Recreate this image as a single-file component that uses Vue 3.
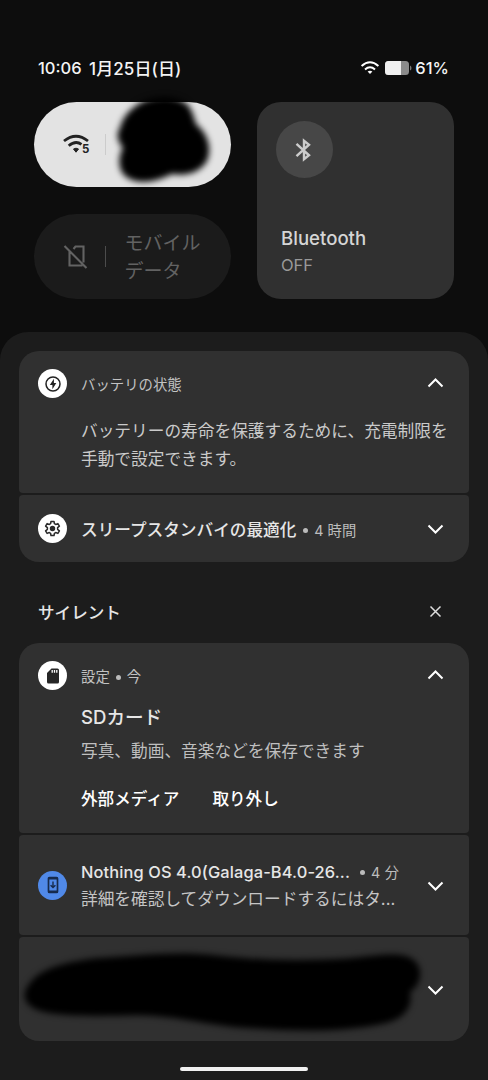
<script setup>
const up = 'M1.5 8.5 8.5 1.5 15.5 8.5'
const down = 'M1.5 1.5 8.5 8.5 15.5 1.5'
</script>

<template>
  <main class="screen">
    <header class="status">
      <span class="clock">10:06</span>
      <span class="date">1月25日(日)</span>
      <span class="grow"></span>
      <svg class="status-wifi" width="20" height="16" viewBox="0 0 20 16" fill="none" stroke="#fff" stroke-width="2">
        <path d="M1.6 6Q10-1.400 18.4 6M5 9.500Q10 5.100 15 9.500" />
        <path d="M7.600 11.500Q10 9.800 12.400 11.500L10 14Z" fill="#fff" stroke="none" />
      </svg>
      <svg class="battery" width="28" height="16" viewBox="0 0 28 16">
        <rect x="1" y="1" width="24" height="14" rx="3.5" fill="#8b8b8b" />
        <path d="M4.500 1H17V15H4.500A3.500 3.500 0 0 1 1 11.500V4.500A3.500 3.500 0 0 1 4.500 1Z" fill="#efefef" />
        <path d="M26 5.500q1.500.5 1.500 2.500T26 10.500Z" fill="#777" />
      </svg>
      <span class="percent">61%</span>
    </header>

    <section class="tiles">
      <div class="pills">
        <div class="pill pill-on">
          <svg class="pill-icon" width="30" height="24" viewBox="0 0 30 24" fill="none" stroke="#222" stroke-width="2.800">
            <path d="M2 8Q14-1.600 26 8M6.700 12.800Q13.500 7 19.500 11.300" />
            <path d="M11.500 16Q14 14.400 16.500 16L14 19.200Z" fill="#222" stroke-width="1" />
            <text x="20" y="20" class="five">5</text>
          </svg>
          <span class="rule"></span>
          <svg class="scribble-top" width="116" height="104" viewBox="0 0 116 104">
            <path d="M12 36C15 23 26 13 38 8C53 3 69 4 79 12C85 19 86 26 88 32C98 40 105 54 99 69C91 82 76 84 64 82C50 89 29 95 16 83C9 75 11 62 15 56C9 49 8 42 12 36Z" />
          </svg>
        </div>
        <div class="pill pill-off">
          <svg class="pill-icon" width="30" height="28" viewBox="0 0 30 28" fill="none" stroke="#636363" stroke-width="2.100">
            <path d="M11.500 6 13.500 3.500H21.500V19.500M7.500 8V22.500H20.500M2.500 3 24.500 25" />
          </svg>
          <span class="rule"></span>
          <span class="pill-text">モバイル<br>データ</span>
        </div>
      </div>
      <div class="bluetooth">
        <span class="bt-circle">
          <svg class="bt-icon" width="22" height="28" viewBox="0 0 22 28" fill="none" stroke="#ccc" stroke-width="2.400">
            <path d="M3.500 7.800 16 19.300 11 23.300V4.700L16 8.700 3.500 20.200" />
          </svg>
        </span>
        <strong class="bt-name">Bluetooth</strong>
        <span class="bt-state">OFF</span>
      </div>
    </section>

    <section class="shade">
      <div class="group">
        <article class="card card-battery">
          <span class="badge">
            <svg width="18" height="18" viewBox="0 0 18 18">
              <circle cx="9" cy="9" r="7" fill="none" stroke="#222" stroke-width="1.500" />
              <path d="M9.900 3.700 5.800 10H8.400V14.300L12.300 8H9.900Z" fill="#222" />
            </svg>
          </span>
          <div class="body">
            <div class="app">バッテリの状態</div>
            <p class="message">バッテリーの寿命を保護するために、充電制限を<br>手動で設定できます。</p>
          </div>
          <svg class="chevron" width="17" height="10" viewBox="0 0 17 10"><path :d="up" /></svg>
        </article>
        <article class="card card-sleep">
          <span class="badge">
            <svg width="17" height="17" viewBox="0 0 18 18" fill="none" stroke="#2a2a2a" stroke-width="1.600" stroke-linejoin="round">
              <path d="M7.400 1.500H10.600L11 3.900 12.400 4.700 14.700 3.800 16.300 6.500 14.400 8.100V9.900L16.300 11.500 14.700 14.200 12.400 13.300 11 14.100 10.600 16.500H7.400L7 14.100 5.600 13.300 3.300 14.200 1.700 11.500 3.600 9.900V8.100L1.700 6.500 3.300 3.800 5.600 4.700 7 3.900Z" />
              <circle cx="9" cy="9" r="2.100" fill="#2a2a2a" />
            </svg>
          </span>
          <div class="body line">
            <span class="title">スリープスタンバイの最適化</span>
            <i class="dot"></i>
            <span class="time">4 時間</span>
          </div>
          <svg class="chevron" width="17" height="10" viewBox="0 0 17 10"><path :d="down" /></svg>
        </article>
      </div>

      <div class="silent">
        <span>サイレント</span>
        <svg width="13" height="13" viewBox="0 0 13 13" fill="none" stroke="#ddd" stroke-width="1.500"><path d="M1.500 1.500 11.500 11.500M11.500 1.500 1.500 11.500" /></svg>
      </div>

      <div class="group">
        <article class="card card-sd">
          <span class="badge">
            <svg width="18" height="18" viewBox="0 0 18 18">
              <path d="M7.500 1.500H13.500Q15 1.500 15 3V15Q15 16.500 13.500 16.500H4.500Q3 16.500 3 15V6Z" fill="#262626" />
              <path d="M8.200 3v2.700M10.500 3v2.700M12.800 3v2.700" stroke="#fff" stroke-width="1.300" />
            </svg>
          </span>
          <div class="body">
            <div class="app line"><span>設定</span><i class="dot"></i><span>今</span></div>
            <div class="sd-title">SDカード</div>
            <div class="sd-text">写真、動画、音楽などを保存できます</div>
            <div class="actions"><span>外部メディア</span><span>取り外し</span></div>
          </div>
          <svg class="chevron" width="17" height="10" viewBox="0 0 17 10"><path :d="up" /></svg>
        </article>
        <article class="card card-update">
          <span class="badge badge-blue">
            <svg width="18" height="20" viewBox="0 0 18 20" fill="none" stroke="#172b4d">
              <rect x="4.500" y="2.500" width="9" height="15" rx="1" stroke-width="1.700" />
              <path d="M4 3.500H14M4 16.500H14" stroke-width="2" />
              <path d="M9 6.500V12.500M6.600 10.200 9 12.600 11.400 10.200" stroke-width="1.400" />
            </svg>
          </span>
          <div class="body">
            <div class="line">
              <span class="os">Nothing OS 4.0(Galaga-B4.0-26...</span>
              <i class="dot"></i>
              <span class="time">4 分</span>
            </div>
            <div class="detail">詳細を確認してダウンロードするにはタ...</div>
          </div>
          <svg class="chevron" width="17" height="10" viewBox="0 0 17 10"><path :d="down" /></svg>
        </article>
        <article class="card card-hidden">
          <svg class="scribble-bottom" width="420" height="95" viewBox="0 0 420 100" preserveAspectRatio="none">
            <path d="M11 40C22 24 48 18 76 14C120 11 158 6 198 11C240 16 280 17 330 14C361 11 383 6 395 16C405 25 402 43 391 49C394 65 386 78 364 83C325 92 279 91 235 88C192 86 164 75 118 74C80 75 40 76 20 69C4 63 2 51 11 40Z" />
          </svg>
          <svg class="chevron" width="17" height="10" viewBox="0 0 17 10"><path :d="down" /></svg>
        </article>
      </div>
      <div class="home-bar"></div>
    </section>
  </main>
</template>

<style>
body { background: #0d0d0d; }
</style>

<style scoped>
* { box-sizing: border-box; }
.screen {
  width: 488px;
  height: 1080px;
  overflow: hidden;
  background: #0d0d0d;
  color: #e6e6e6;
  font-family: Inter, "Noto Sans CJK JP", sans-serif;
  white-space: nowrap;
}
svg { display: block; flex: none; }
.status {
  display: flex;
  align-items: center;
  height: 102px;
  padding: 34px 39px 0 38px;
  font-size: 16.5px;
  font-weight: 550;
  color: #f4f4f4;
}
.clock { width: 51px; }
.date { margin-top: -2px; font-size: 17px; font-weight: 500; letter-spacing: 0.1px; }
.grow { flex: 1; }
.status-wifi { margin-right: 4px; }
.battery { margin-right: 3px; }
.percent { font-size: 16.5px; font-weight: 500; }
.tiles {
  display: flex;
  gap: 26px;
  height: 230px;
  padding: 0 34px;
}
.pills { display: flex; flex-direction: column; gap: 27px; width: 197px; }
.pill {
  position: relative;
  display: flex;
  align-items: center;
  height: 85px;
  padding-left: 28px;
  border-radius: 43px;
}
.pill-on { background: #e3e3e3; }
.pill-off { background: #1b1b1b; color: #626262; }
.five { font: 700 11.5px Inter, sans-serif; fill: #222; stroke: none; }
.rule { width: 1px; height: 21px; margin-left: 13px; background: #ccc; }
.pill-off .rule { background: #4c4c4c; }
.pill-text { margin-left: 18.5px; padding-top: 3px; font-size: 19px; line-height: 28px; }
.scribble-top { position: absolute; left: 74px; top: -10px; filter: blur(3px); }
.bluetooth {
  display: flex;
  flex-direction: column;
  width: 197px;
  height: 197px;
  padding: 19px 0 0 19px;
  border-radius: 24px;
  background: #303030;
}
.bt-circle {
  display: grid;
  place-items: center;
  width: 57px;
  height: 57px;
  border-radius: 50%;
  background: #474747;
}
.bt-icon { margin-right: 1px; }
.bt-name { margin: 47px 0 0 5px; font-size: 18.6px; font-weight: 500; line-height: 27px; color: #d5d5d5; }
.bt-state { margin-left: 5px; font-size: 16.5px; line-height: 26px; color: #999; }
.shade {
  height: 748px;
  padding: 19px 19px 0;
  border-radius: 28px 28px 0 0;
  background: #1c1c1c;
}
.group { display: flex; flex-direction: column; gap: 2px; }
.card {
  position: relative;
  display: flex;
  align-items: flex-start;
  padding: 0 25px 0 19px;
  border-radius: 4px;
  background: #303030;
}
.card:first-child { border-radius: 20px 20px 4px 4px; }
.card:last-child { border-radius: 4px 4px 20px 20px; }
.card-battery { height: 142px; padding-top: 18px; }
.card-sleep { height: 67px; align-items: center; }
.card-sd { height: 190px; padding-top: 18px; }
.card-update { height: 100px; align-items: center; }
.card-hidden { height: 104px; align-items: center; }
.badge {
  display: grid;
  place-items: center;
  flex: none;
  width: 29px;
  height: 29px;
  border-radius: 50%;
  background: #fff;
}
.badge-blue { background: #5089e8; }
.body { flex: 1; min-width: 0; margin-left: 14px; }
.line { display: flex; align-items: center; }
.app { height: 29px; padding-top: 1px; font-size: 14.4px; line-height: 29px; color: #c2c2c2; }
.message { margin: 19px 0 0; font-size: 16.7px; line-height: 28px; color: #cacaca; }
.title { font-size: 16.65px; font-weight: 500; }
.dot { width: 5px; height: 5px; margin: 3px 6px 0 7px; border-radius: 50%; background: #bbb; }
.app .dot { margin: 2px 6px 0; }
.time { padding-top: 1px; font-size: 14.3px; color: #bdbdbd; }
.card-update .dot { margin-top: 2px; }
.card-update .time { padding-top: 0; margin-top: -1px; letter-spacing: 0.3px; }
.chevron {
  margin-left: auto;
  fill: none;
  stroke: #fff;
  stroke-width: 2;
}
.card-update .chevron, .card-hidden .chevron { margin-top: 2px; }
.card-battery .chevron, .card-sd .chevron { margin-top: 9px; }
.silent {
  display: flex;
  align-items: center;
  justify-content: space-between;
  height: 81px;
  padding: 18px 27px 0 19px;
  font-size: 16.6px;
  font-weight: 500;
}
.sd-title { margin-top: 13px; height: 29px; font-size: 18.6px; font-weight: 500; line-height: 29px; }
.sd-text { margin-top: 4px; font-size: 16.7px; line-height: 30px; color: #bfbfbf; }
.actions { display: flex; gap: 33px; margin-top: 18px; font-size: 16.6px; font-weight: 500; line-height: 30px; color: #fff; }
.os { width: 272px; font-size: 16.4px; font-weight: 500; line-height: 26px; letter-spacing: 0.12px; }
.detail { padding-top: 1px; font-size: 16.7px; line-height: 26px; color: #c5c5c5; }
.scribble-bottom { position: absolute; left: 0; top: 8px; filter: blur(3px); }
.home-bar { width: 128px; height: 4px; margin: 26px auto 0; border-radius: 2px; background: #f0f0f0; }
</style>
